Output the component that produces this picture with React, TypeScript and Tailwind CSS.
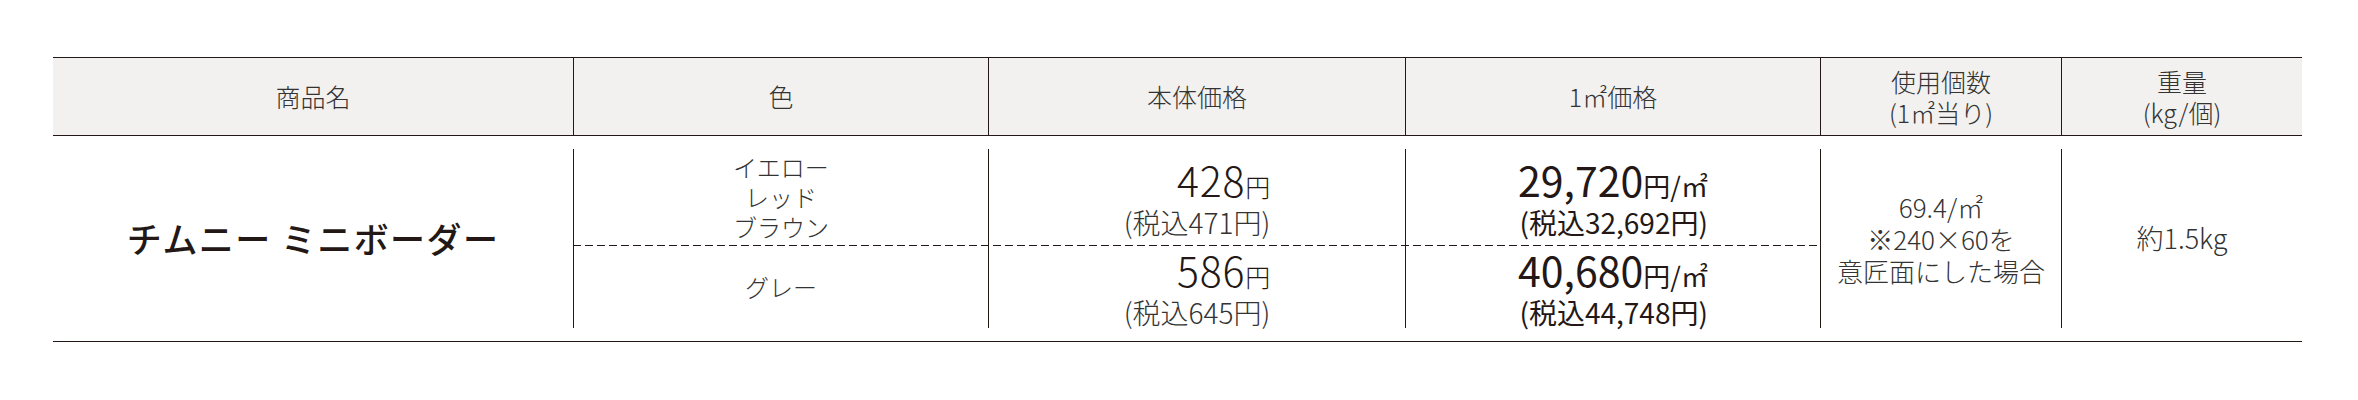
const dash =
  'bg-[repeating-linear-gradient(to_right,#231815_0_8px,transparent_8px_12px)]'

function Head({ children, first }: { children: React.ReactNode; first?: boolean }) {
  return (
    <div
      className={`flex flex-col items-center justify-center text-center text-[25px] leading-[31px] font-light text-[#333] ${
        first ? '' : 'border-l border-[#231815]'
      }`}
    >
      {children}
    </div>
  )
}

function Price({ main, tax }: { main: string; tax: string }) {
  return (
    <div className="inline-block text-right text-[#231815] font-light">
      <div className="text-[41px] leading-[42px]">
        <span className="tracking-[0.02em]">{main}</span>
        <span className="text-[25px]">円</span>
      </div>
      <div className="text-[28px] leading-[30px] text-[#333]">(税込{tax}円)</div>
    </div>
  )
}

function SqPrice({ main, tax }: { main: string; tax: string }) {
  return (
    <div className="inline-block text-right text-[#231815] font-normal">
      <div className="text-[41px] leading-[42px]">
        <span>{main}</span>
        <span className="text-[27px]">円/㎡</span>
      </div>
      <div className="text-[28px] leading-[30px]">(税込{tax}円)</div>
    </div>
  )
}

export default function App() {
  return (
    <div className="w-[2358px] h-[400px] bg-white pt-[57px] font-['Noto_Sans_CJK_JP',sans-serif]">
      <div className="ml-[53px] w-[2249px] border-y border-[#231815]">
        <div className="grid h-[78px] grid-cols-[520px_415px_417px_415px_241px_241px] border-b border-[#231815] bg-[#f2f1ef]">
          <Head first>商品名</Head>
          <Head>色</Head>
          <Head>本体価格</Head>
          <Head>1㎡価格</Head>
          <Head>
            <span>使用個数</span>
            <span>(1㎡当り)</span>
          </Head>
          <Head>
            <span>重量</span>
            <span>(kg/個)</span>
          </Head>
        </div>

        <div className="py-[13px]">
          <div className="grid grid-cols-[520px_415px_417px_415px_241px_241px] grid-rows-[96px_1px_82px]">
            <div className="row-span-3 flex items-center justify-center text-[35px] tracking-[0.04em] font-medium text-[#231815]">
              チムニー ミニボーダー
            </div>

            <div className="flex flex-col items-center justify-center border-l border-[#231815] text-[24px] leading-[30px] font-light text-[#333]">
              <span>イエロー</span>
              <span>レッド</span>
              <span>ブラウン</span>
            </div>
            <div className="flex items-center justify-center border-l border-[#231815]">
              <Price main="428" tax="471" />
            </div>
            <div className="flex items-center justify-center border-l border-[#231815]">
              <SqPrice main="29,720" tax="32,692" />
            </div>

            <div className="row-span-3 flex flex-col items-center justify-center border-l border-[#231815] text-[26px] leading-[32px] font-light text-[#333]">
              <span>69.4/㎡</span>
              <span>※240×60を</span>
              <span>意匠面にした場合</span>
            </div>
            <div className="row-span-3 flex items-center justify-center border-l border-[#231815] text-[27px] font-light text-[#333]">
              約1.5kg
            </div>

            <div className={`col-span-3 h-px ${dash}`} />

            <div className="flex items-center justify-center border-l border-[#231815] text-[24px] font-light text-[#333]">
              グレー
            </div>
            <div className="flex items-center justify-center border-l border-[#231815]">
              <Price main="586" tax="645" />
            </div>
            <div className="flex items-center justify-center border-l border-[#231815]">
              <SqPrice main="40,680" tax="44,748" />
            </div>
          </div>
        </div>
      </div>
    </div>
  )
}
